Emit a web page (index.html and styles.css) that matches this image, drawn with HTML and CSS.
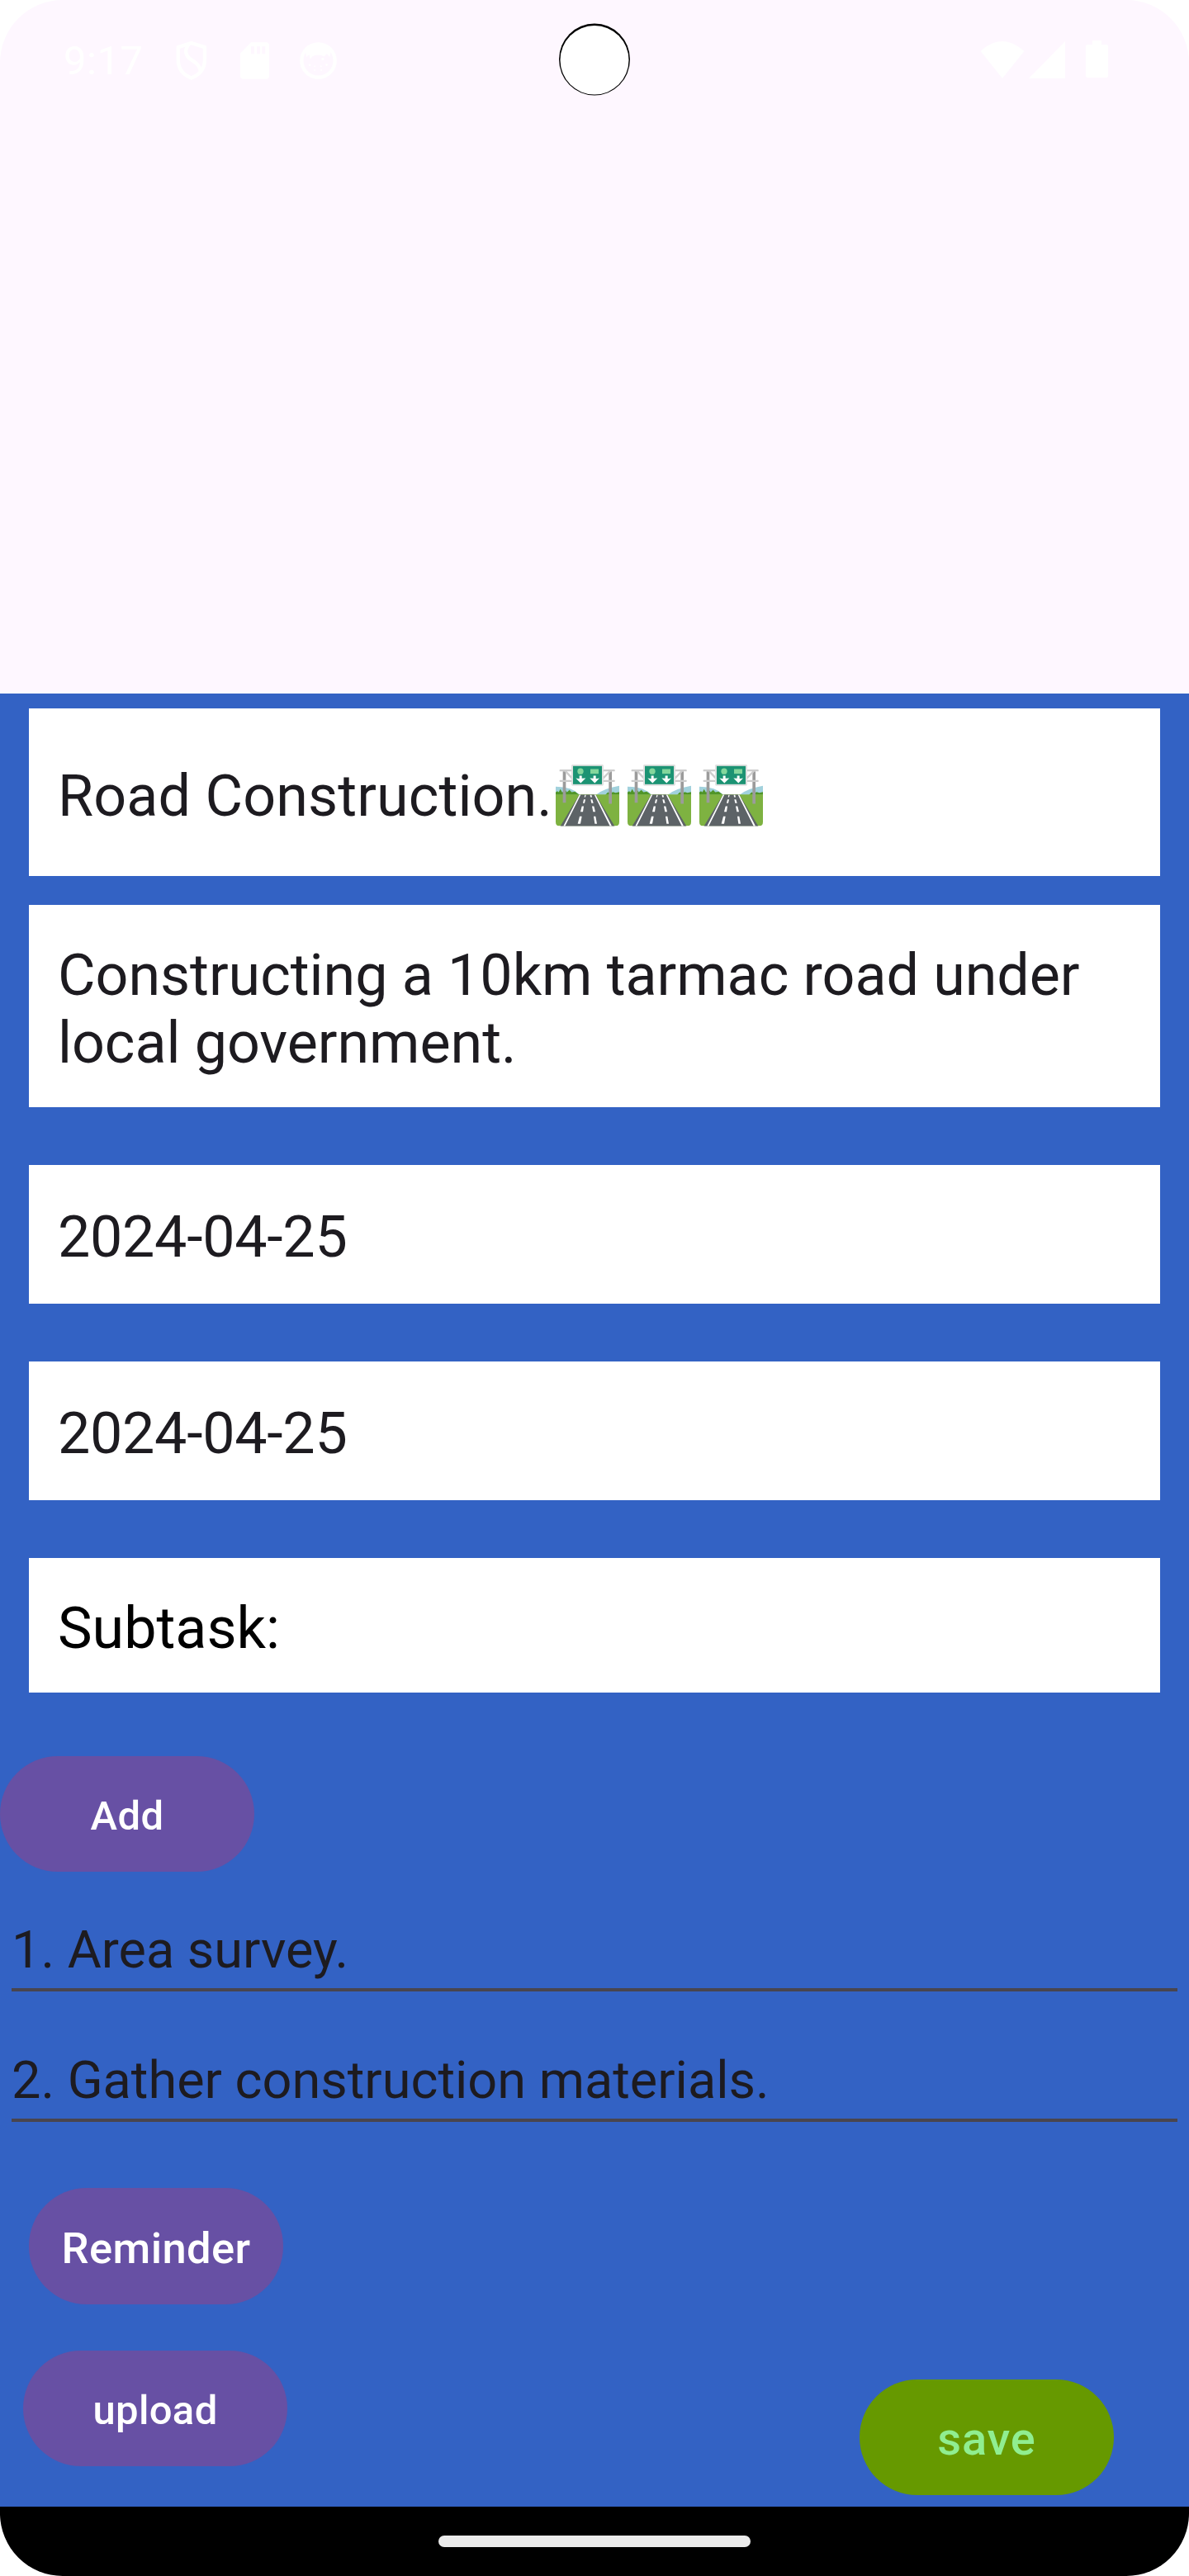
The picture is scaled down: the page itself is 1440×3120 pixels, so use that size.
FILE: index.html
```html
<!DOCTYPE html>
<html lang="en">
<head>
<meta charset="utf-8">
<title>Task details</title>
<link rel="stylesheet" href="styles.css">
</head>
<body>
<svg width="0" height="0" class="defs" aria-hidden="true">
  <symbol id="motorway" viewBox="0 0 231 224">
    <clipPath id="land"><path d="M0 60H231V209Q231 223 217 223H14Q0 223 0 209Z"/></clipPath>
    <g clip-path="url(#land)">
      <path d="M0 80Q60 80 88 110H0ZM231 77Q170 88 146 110H231Z" fill="#a1d1dc"/>
      <path d="M0 100L6 96 11 100 17 89 24 101 35 92 41 100 50 92 58 100 70 98 86 110H0ZM180 110L190 100 199 104 208 99 218 102 231 99V110Z" fill="#509528"/>
      <path d="M0 108H231V224H0Z" fill="#7eb241"/>
    </g>
    <path d="M26 24H37V138H26ZM193 24H204V142H193Z" fill="#9b9b9b"/>
    <path d="M17 21H60M17 59H60M34 22L64 54M170 21H212M170 59H212M199 22L168 54" stroke="#ccc" stroke-width="7" fill="none" stroke-linecap="round"/>
    <rect x="57" y="-1" width="117" height="78" rx="6" fill="#e0e0e0"/>
    <rect x="63" y="5" width="105" height="66" fill="#1c9373"/>
    <circle cx="90" cy="24" r="11" fill="#83d69c"/>
    <path d="M126 16H156V33H126Z" fill="#83d69c"/>
    <path d="M86 40H95V50L109 49 91 67 73 49 86 51ZM137 40H146V51L159 49 142 67 124 49 137 50Z" fill="#fff"/>
    <path d="M86 109H145L214 223H17Z" fill="#5d6367"/>
    <path d="M86 109H91L34 223H28ZM140 109H145L204 223H197Z" fill="#fff"/>
    <path d="M106 110H110L108 118H104ZM102 126H108L105 140H99ZM95 151H102L99 171H90ZM87 188H95L90 215H80ZM125 110H130L132 118H126ZM127 126H133L137 140H130ZM132 151H139L144 171H136ZM138 188H145L150 215H142Z" fill="#fff"/>
  </symbol>
</svg>
<div class="phone">
  <header class="status">
    <span class="clock">9:17</span>
    <svg class="s-shield" viewBox="0 0 120 146"><path d="M59 9L108 24V68Q108 118 59 136Q11 118 11 68V24Z" fill="none" stroke="#fff" stroke-width="13" stroke-linejoin="round"/><path d="M50 14C32 34 38 55 58 69C82 84 90 94 92 110" fill="none" stroke="#fff" stroke-width="13"/></svg>
    <svg class="s-card" viewBox="0 0 105 134"><path fill="#fff" fill-rule="evenodd" d="M39 0H93Q105 0 105 12V122Q105 134 93 134H12Q0 134 0 122V40ZM39 15V42H51V15ZM60 15V42H72V15ZM79 15V42H91V15Z"/></svg>
    <svg class="s-cat" viewBox="0 0 134 134"><circle cx="67" cy="67" r="60" fill="none" stroke="#fff" stroke-width="13"/><path fill="#fff" d="M20 25Q65-5 114 25L108 54 98 42 88 52 76 47H58L46 51 38 61 34 45 24 54Z"/><g fill="#fff"><circle cx="83" cy="61" r="5"/><circle cx="36" cy="83" r="4"/><circle cx="54" cy="87" r="3"/><circle cx="77" cy="87" r="3"/><circle cx="97" cy="82" r="4"/><circle cx="54" cy="101" r="3"/><circle cx="78" cy="101" r="3"/></g></svg>
    <span class="space"></span>
    <svg class="s-wifi" viewBox="0 0 53 45"><path fill="#fff" d="M0 12Q26-12 53 12L26.500 45Z"/></svg>
    <svg class="s-cell" viewBox="0 0 44 45"><path fill="#fff" d="M44 0V45H0Z"/></svg>
    <svg class="s-batt" viewBox="0 0 27 45"><path fill="#fff" d="M8 0H19V5H25Q27 5 27 7V43Q27 45 25 45H2Q0 45 0 43V7Q0 5 2 5H8Z"/></svg>
    <svg class="camera" viewBox="0 0 86 88"><ellipse cx="43" cy="44" rx="43" ry="43.500" fill="#000"/><ellipse cx="43" cy="44.800" rx="41.500" ry="41.800" fill="#fff"/></svg>
  </header>
  <main class="form">
    <div class="field title"><span class="name">Road Construction.</span><span class="emoji" role="img" aria-label="motorway"><svg><use href="#motorway"/></svg><svg><use href="#motorway"/></svg><svg><use href="#motorway"/></svg></span></div>
    <div class="field desc">Constructing a 10km tarmac road under<br>local government.</div>
    <div class="field date">2024-04-25</div>
    <div class="field date">2024-04-25</div>
    <div class="field subtask">Subtask:</div>
    <button class="btn add">Add</button>
    <div class="item">1. Area survey.</div>
    <div class="item">2. Gather construction materials.</div>
    <div class="actions">
      <div class="left">
        <button class="btn reminder">Reminder</button>
        <button class="btn upload">upload</button>
      </div>
      <button class="btn save">save</button>
    </div>
  </main>
  <footer class="nav"><span class="handle"></span></footer>
</div>
</body>
</html>
```
FILE: styles.css
```css
* { box-sizing: border-box; }
body { margin: 0; background: #fff; font-family: Roboto, "Liberation Sans", sans-serif; }
.defs { position: absolute; }
.phone { width: 1440px; height: 3120px; display: flex; flex-direction: column; border-radius: 76px; overflow: hidden; background: #fef7ff; }
.status { position: relative; height: 840px; padding: 0 94px 0 77px; display: flex; align-items: flex-start; }
.status svg { flex: none; display: block; }
.clock { width: 135px; margin-top: 45px; font-size: 49px; line-height: 57px; letter-spacing: 0.5px; color: #fff; }
.s-shield { width: 40px; height: 49px; margin-top: 49px; }
.s-card { width: 35px; height: 45px; margin: 51px 0 0 39px; }
.s-cat { width: 45px; height: 45px; margin: 51px 0 0 37px; }
.space { flex: 1; }
.s-wifi { width: 54px; height: 45px; margin-top: 50px; }
.s-cell { width: 44px; height: 45px; margin: 50px 0 0 5px; }
.s-batt { width: 27px; height: 45px; margin: 49px 4px 0 25px; }
.camera { position: absolute; left: 677px; top: 28px; width: 86px; height: 88px; }

.form { height: 2196px; padding-top: 18px; background: #3362c4; display: flex; flex-direction: column; }
.field { margin: 0 35px; padding: 0 35px; background: #fff; color: #1d1b20; font-size: 70px; line-height: 82px; display: flex; align-items: center; white-space: nowrap; }
.title { height: 203px; padding-top: 8px; }
.name { width: 603px; letter-spacing: 0.1px; }
.emoji { display: flex; gap: 10px; }
.emoji svg { width: 77px; height: 75px; display: block; overflow: visible; }
.desc { height: 245px; margin-top: 35px; padding-top: 6px; letter-spacing: -0.05px; }
.date { height: 168px; margin-top: 70px; padding-top: 6px; letter-spacing: -0.3px; }
.subtask { height: 163px; margin-top: 70px; padding-top: 7px; color: #000; }
.btn { border: 0; padding: 4px 0 0; width: 308px; height: 140px; border-radius: 70px; background: #6750a4; color: #fff; font: 500 49px/57px Roboto, "Liberation Sans", sans-serif; letter-spacing: 0.00714em; text-align: center; }
.add { margin: 77px 0 25px; }
.item { height: 120px; margin: 0 14px 38px; border-bottom: 4px solid #49454f; font-size: 63px; line-height: 74px; padding-top: 33px; color: #1d1b20; white-space: nowrap; }
.actions { display: flex; justify-content: space-between; margin: 42px 91px 0 28px; }
.left { display: flex; flex-direction: column; gap: 56px; }
.reminder { height: 141px; margin-left: 7px; padding-top: 5px; font-size: 52.5px; }
.upload { width: 320px; }
.save { margin-top: 232px; padding-top: 5px; background: #669900; color: #90ee90; font-size: 56px; letter-spacing: 0.015em; }
.nav { height: 84px; background: #000; display: flex; justify-content: center; align-items: center; }
.handle { width: 378px; height: 14px; border-radius: 7px; background: #ebebeb; }
```
